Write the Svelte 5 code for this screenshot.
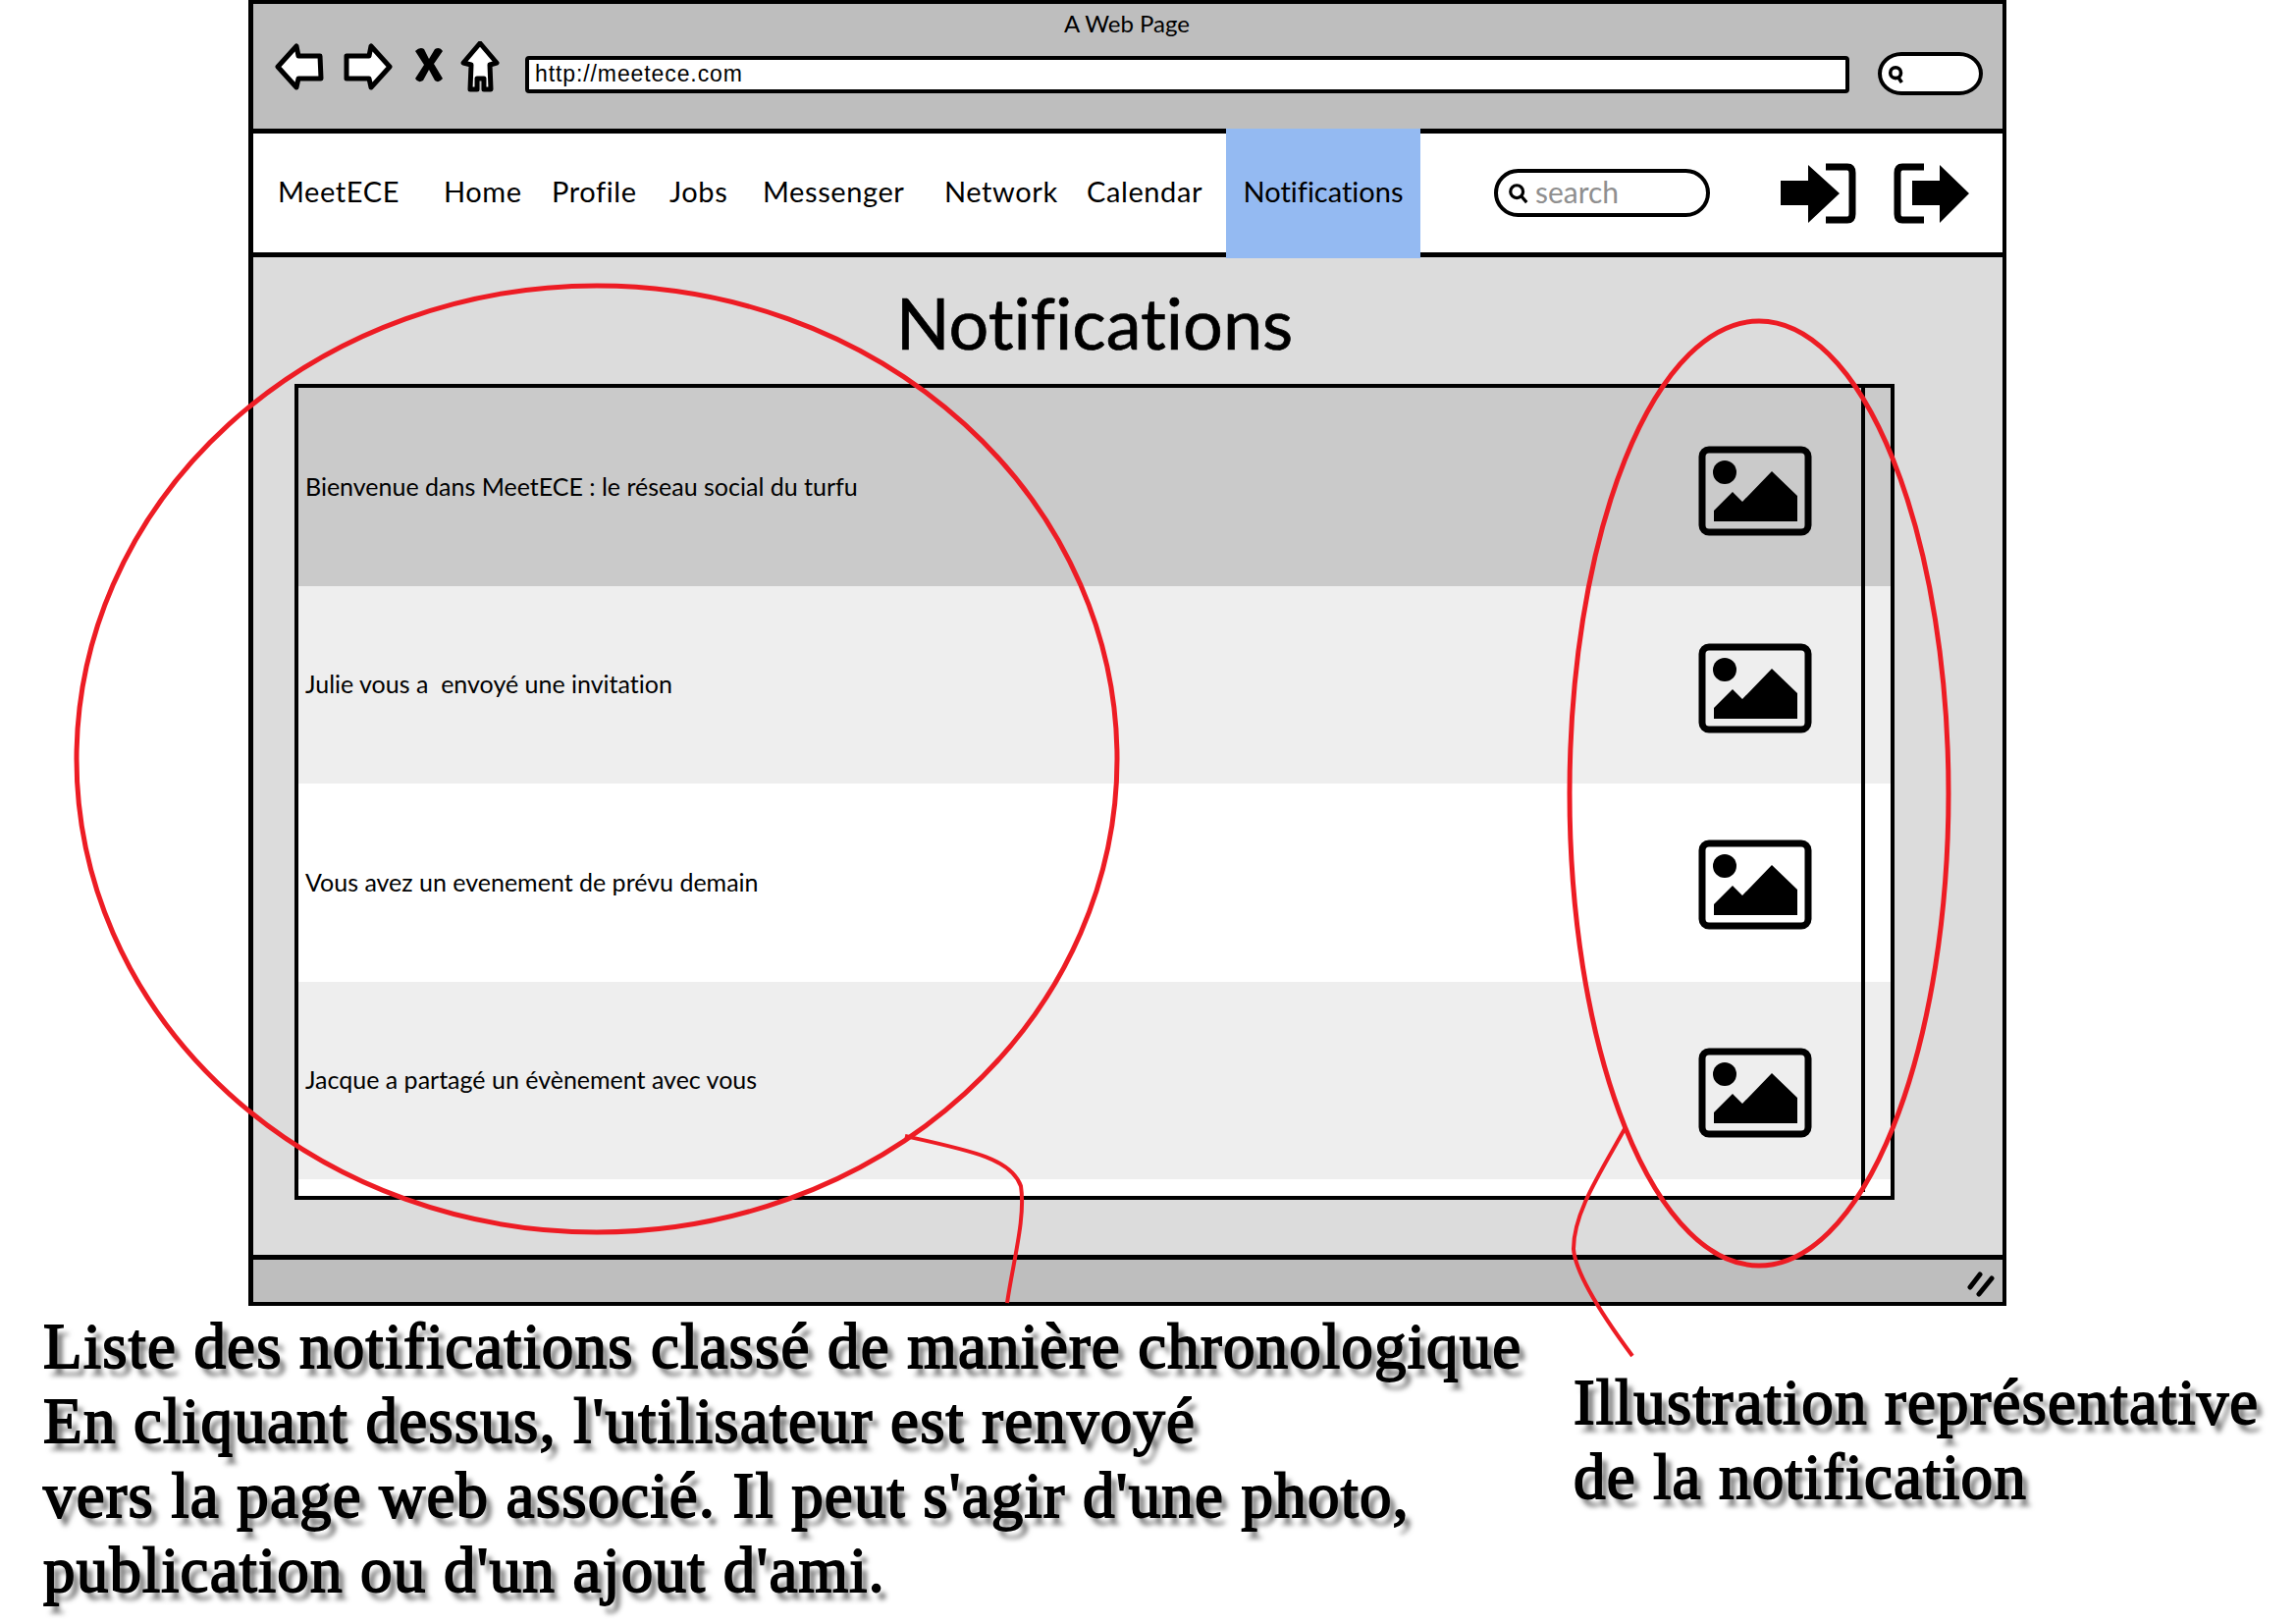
<script lang="ts">
  const links = ['MeetECE', 'Home', 'Profile', 'Jobs', 'Messenger', 'Network', 'Calendar'];

  const notifications = [
    { text: 'Bienvenue dans MeetECE : le réseau social du turfu', tone: 'dark', shift: 'a' },
    { text: 'Julie vous a  envoyé une invitation', tone: 'light', shift: 'a' },
    { text: 'Vous avez un evenement de prévu demain', tone: 'white', shift: 'b' },
    { text: 'Jacque a partagé un évènement avec vous', tone: 'light', shift: 'c' }
  ];
</script>

<div class="page">
  <div class="window">
    <header class="chrome">
      <div class="chrome__title">A Web Page</div>
      <div class="toolbar">
        <svg class="tool tool--back" viewBox="0 0 52 48">
          <path d="M3 24 L22 3 L24 13 L46 13 L47 36 L24 36 L22 45 Z" />
        </svg>
        <svg class="tool tool--forward" viewBox="0 0 58 48">
          <path d="M49 24 L30 3 L28 13 L5 13 L5 36 L28 36 L30 45 Z" />
        </svg>
        <svg class="tool tool--stop" viewBox="0 0 30 36">
          <path class="solid" d="M1 4 Q6 -1 10 2 L15 12 L21 2 Q26 -1 29 4 L20 17 L29 32 Q25 37 21 34 L15 23 L9 34 Q4 37 1 32 L10 18 Z" />
        </svg>
        <svg class="tool tool--home" viewBox="0 0 51 52">
          <path d="M21 2 L38 22 L31 24 L32 49 L25 49 L25 38 L18 38 L18 49 L11 49 L12 24 L4 22 Z" />
        </svg>
        <div class="url">http://meetece.com</div>
        <div class="browser-search">
          <svg viewBox="0 0 20 24">
            <circle cx="9" cy="10" r="6" />
            <path d="M12 15 L16 21" />
          </svg>
        </div>
      </div>
    </header>

    <nav class="nav">
      {#each links as link}
        <a class="nav__link" href="#top">{link}</a>
      {/each}
      <a class="nav__link nav__link--active" href="#top">Notifications</a>
      <div class="search">
        <svg viewBox="0 0 24 24">
          <circle cx="10" cy="10" r="7" />
          <path d="M15 15 L21 22" />
        </svg>
        <span>search</span>
      </div>
      <svg class="door door--in" viewBox="0 0 77 62">
        <path d="M0 18 H28 V2 L60 31 L28 61 V43 H0 Z" />
        <path class="door__frame" d="M46 4 H68 Q73 4 73 10 V52 Q73 58 68 58 H46" />
      </svg>
      <svg class="door door--out" viewBox="0 0 77 62">
        <path class="door__frame" d="M31 4 H9 Q4 4 4 10 V52 Q4 58 9 58 H31" />
        <path d="M19 18 H47 V2 L77 31 L47 61 V43 H19 Z" />
      </svg>
    </nav>

    <main class="main">
      <h1 class="main__title">Notifications</h1>
      <div class="list">
        {#each notifications as item}
          <div class="row row--{item.tone}">
            <span class="row__text">{item.text}</span>
            <svg class="picture picture--{item.shift}" viewBox="0 0 116 92">
              <rect x="4" y="4" width="108" height="84" rx="7" />
              <circle cx="27" cy="27" r="12" />
              <path d="M16 66 L35 47 L45 57 L75 26 L101 51 V77 H16 Z" />
            </svg>
          </div>
        {/each}
        <div class="list__rule"></div>
      </div>
    </main>

    <footer class="status">
      <svg class="grip" viewBox="0 0 28 26">
        <path d="M3 16 L13 3 M12 23 L25 7" />
      </svg>
    </footer>
  </div>

  <section class="notes">
    <p class="note note--list">
      Liste des notifications classé de manière chronologique<br />
      En cliquant dessus, l'utilisateur est renvoyé<br />
      vers la page web associé. Il peut s'agir d'une photo,<br />
      publication ou d'un ajout d'ami.
    </p>
    <p class="note note--picture">
      Illustration représentative<br />
      de la notification
    </p>
  </section>

  <svg class="marks" viewBox="0 0 2339 1654">
    <ellipse cx="608" cy="773" rx="530" ry="482" />
    <ellipse cx="1792" cy="808" rx="193" ry="481" />
    <path class="lead" d="M922 1157 C990 1172 1030 1180 1040 1208 C1045 1240 1032 1285 1026 1327" />
    <path class="lead" d="M1656 1148 C1630 1195 1603 1235 1603 1272 C1605 1300 1640 1350 1663 1381" />
  </svg>
</div>

<style>
  :global(body) {
    margin: 0;
    background: #fff;
  }

  .page {
    position: relative;
    width: 2339px;
    height: 1654px;
    overflow: hidden;
    background: #fff;
    font-family: Lato, 'Noto Sans', sans-serif;
    font-variant-ligatures: none;
    color: #000;
  }

  .window {
    box-sizing: border-box;
    width: 1791px;
    margin-left: 253px;
    border: 4px solid #000;
    border-left-width: 5px;
    background: #dcdcdc;
  }

  .chrome {
    height: 127px;
    background: #bebebe;
  }

  .chrome__title {
    height: 40px;
    line-height: 40px;
    text-align: center;
    font-size: 24px;
    padding-right: 2px;
  }

  .toolbar {
    display: flex;
    align-items: flex-start;
    gap: 16px;
    padding-left: 22px;
  }

  .tool {
    flex: none;
    height: 48px;
    fill: #fff;
    stroke: #000;
    stroke-width: 5;
    stroke-linejoin: round;
  }

  .tool--back {
    width: 52px;
  }

  .tool--forward {
    width: 58px;
  }

  .tool--stop {
    width: 30px;
    height: 36px;
    margin-top: 4px;
  }

  .tool--home {
    width: 51px;
    height: 52px;
    margin-top: -2px;
  }

  .solid {
    fill: #000;
    stroke: none;
  }

  .url {
    box-sizing: border-box;
    width: 1349px;
    height: 38px;
    margin-top: 13px;
    padding-left: 6px;
    border: 4px solid #000;
    border-radius: 4px;
    background: #fff;
    font-family: 'Liberation Sans', Arial, sans-serif;
    font-size: 23px;
    letter-spacing: 0.9px;
    line-height: 28px;
  }

  .browser-search {
    box-sizing: border-box;
    width: 107px;
    height: 44px;
    margin: 9px 0 0 13px;
    padding: 8px 0 0 6px;
    border: 4px solid #000;
    border-radius: 24px / 22px;
    background: #fff;
  }

  .browser-search svg {
    display: block;
    width: 18px;
    height: 22px;
    fill: none;
    stroke: #000;
    stroke-width: 4;
  }

  .nav {
    box-sizing: border-box;
    display: grid;
    grid-template-columns: 169px 110px 120px 95px 185px 145px 142px 200px 293px 149px 115px;
    align-items: center;
    height: 131px;
    padding-left: 25px;
    border-top: 5px solid #000;
    border-bottom: 5px solid #000;
    background: #fff;
  }

  .nav__link {
    color: #000;
    text-decoration: none;
    font-size: 29px;
    letter-spacing: 0.6px;
    white-space: nowrap;
    margin-top: -5px;
  }

  .nav__link--active {
    align-self: stretch;
    display: flex;
    align-items: center;
    justify-content: center;
    margin: -5px 2px -6px 0;
    padding-bottom: 5px;
    letter-spacing: 0;
    background: #94baf2;
    position: relative;
  }

  .search {
    box-sizing: border-box;
    display: flex;
    align-items: center;
    gap: 6px;
    width: 220px;
    height: 49px;
    margin-left: 73px;
    padding-left: 10px;
    border: 4px solid #000;
    border-radius: 25px;
    color: #8f8f8f;
    font-size: 30px;
  }

  .search span {
    margin-top: -3px;
  }

  .search svg {
    width: 22px;
    height: 24px;
    fill: none;
    stroke: #000;
    stroke-width: 3.5;
  }

  .door {
    width: 77px;
    height: 62px;
    fill: #000;
  }

  .door--in {
    margin-left: 72px;
  }

  .door--out {
    margin-left: 38px;
  }

  .door__frame {
    fill: none;
    stroke: #000;
    stroke-width: 7;
  }

  .main {
    height: 1016px;
    padding-left: 42px;
  }

  .main__title {
    width: 1630px;
    height: 129px;
    margin: 0;
    padding-top: 2px;
    box-sizing: border-box;
    line-height: 129px;
    text-align: center;
    font-size: 72px;
    font-weight: 400;
    -webkit-text-stroke: 0.7px #000;
  }

  .list {
    position: relative;
    box-sizing: border-box;
    width: 1630px;
    height: 831px;
    border: 4px solid #000;
    background: #fff;
  }

  .list__rule {
    position: absolute;
    top: 0;
    bottom: 4px;
    right: 26px;
    width: 4px;
    background: #000;
  }

  .row {
    display: flex;
    align-items: center;
    justify-content: space-between;
    box-sizing: border-box;
    height: 201.5px;
    padding: 0 80px 0 7px;
  }

  .row--dark {
    background: #cacaca;
  }

  .row--light {
    background: #eeeeee;
  }

  .row--white {
    background: #fff;
  }

  .row__text {
    font-size: 25px;
    white-space: pre;
    margin-top: -2px;
  }

  .picture {
    flex: none;
    width: 116px;
    height: 92px;
  }

  .picture--a {
    margin-top: 8px;
  }

  .picture--b {
    margin-top: 4px;
  }

  .picture--c {
    margin-top: 26px;
  }

  .picture rect {
    fill: none;
    stroke: #000;
    stroke-width: 7;
  }

  .notes {
    display: flex;
    padding-left: 44px;
  }

  .note {
    margin: 0;
    font-family: 'Liberation Serif', 'Times New Roman', serif;
    font-size: 65px;
    letter-spacing: 1.2px;
    line-height: 76px;
    white-space: nowrap;
    -webkit-text-stroke: 1.8px #000;
    text-shadow: 6px 8px 5px rgba(0, 0, 0, 0.55);
  }

  .note--list {
    width: 1559px;
    padding-top: 3px;
  }

  .note--picture {
    padding-top: 60px;
  }

  .marks {
    position: absolute;
    inset: 0;
    width: 2339px;
    height: 1654px;
    pointer-events: none;
    fill: none;
    stroke: #ed1c24;
    stroke-width: 5;
  }

  .lead {
    stroke-width: 4;
  }

  .grip {
    position: absolute;
    right: 8px;
    top: 12px;
    width: 28px;
    height: 26px;
    fill: none;
    stroke: #000;
    stroke-width: 5;
    stroke-linecap: round;
  }

  .status {
    position: relative;
    box-sizing: border-box;
    height: 48px;
    border-top: 5px solid #000;
    background: #bebebe;
  }
</style>
